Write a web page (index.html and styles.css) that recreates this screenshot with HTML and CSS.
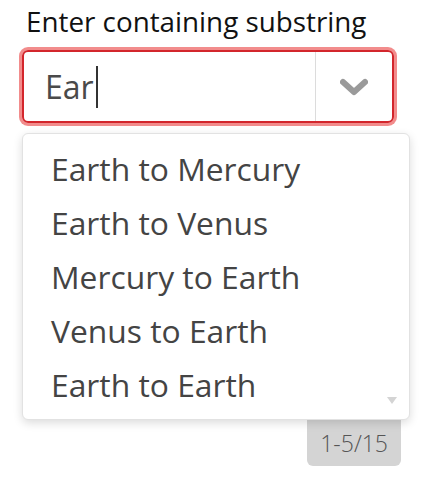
FILE: index.html
```html
<!DOCTYPE html>
<html>
<head>
<meta charset="utf-8">
<link rel="stylesheet" href="styles.css">
</head>
<body>
<div class="field">
  <label class="label">Enter containing substring</label>
  <div class="combo">
    <div class="value">Ear<span class="caret"></span></div>
    <div class="toggle">
      <svg width="28" height="18" viewBox="0 0 28 18"><polyline points="3,4 14,14 25,4" fill="none" stroke="#9a9a9a" stroke-width="6" stroke-linejoin="round" stroke-linecap="round"/></svg>
    </div>
  </div>
  <div class="menu">
    <div class="item">Earth to Mercury</div>
    <div class="item">Earth to Venus</div>
    <div class="item">Mercury to Earth</div>
    <div class="item">Venus to Earth</div>
    <div class="item">Earth to Earth</div>
    <span class="more"></span>
  </div>
  <div class="count-row"><div class="count">1-5/15</div></div>
</div>
</body>
</html>
```
FILE: styles.css
```css
html, body { margin: 0; padding: 0; background: #fff; }
body { font-family: "Open Sans", "Noto Sans", sans-serif; }
.field { width: 388px; margin-left: 22px; display: flex; flex-direction: column; }
.label { display: block; font-size: 27.8px; line-height: 36px; padding-top: 3px; margin-left: 4px; color: #111; }
.combo {
  margin-top: 11px;
  width: 372px; height: 73px; box-sizing: border-box;
  border: 2px solid #d3262c; border-radius: 6px;
  box-shadow: 0 0 0 3px rgba(240, 120, 120, 0.85);
  display: flex;
}
.value { flex: 1; padding-left: 21px; font-size: 32px; line-height: 69px; color: #4a4a4a; display: flex; align-items: center; }
.caret { display: inline-block; width: 2px; height: 42px; background: #333; margin-left: 2px; }
.toggle { width: 76px; border-left: 1px solid #dcdcdc; display: flex; align-items: center; justify-content: center; }
.menu {
  position: relative;
  margin-top: 10px;
  box-sizing: border-box; height: 287px;
  border: 1px solid #e2e2e2; border-radius: 6px;
  box-shadow: 0 3px 10px rgba(0, 0, 0, 0.14);
  padding: 8px 0 0 28px;
  background: #fff;
}
.item { font-size: 31.8px; line-height: 54px; color: #444; }
.more {
  position: absolute; right: 12px; bottom: 15px;
  width: 0; height: 0;
  border-left: 5px solid transparent; border-right: 5px solid transparent; border-top: 7px solid #d4d4d4;
}
.count-row { display: flex; justify-content: flex-end; padding-right: 9px; }
.count {
  background: #d4d4d4; color: #555; font-size: 23px; font-weight: 300; line-height: 46px;
  padding: 0 13px; border-radius: 0 0 6px 6px;
}
```
